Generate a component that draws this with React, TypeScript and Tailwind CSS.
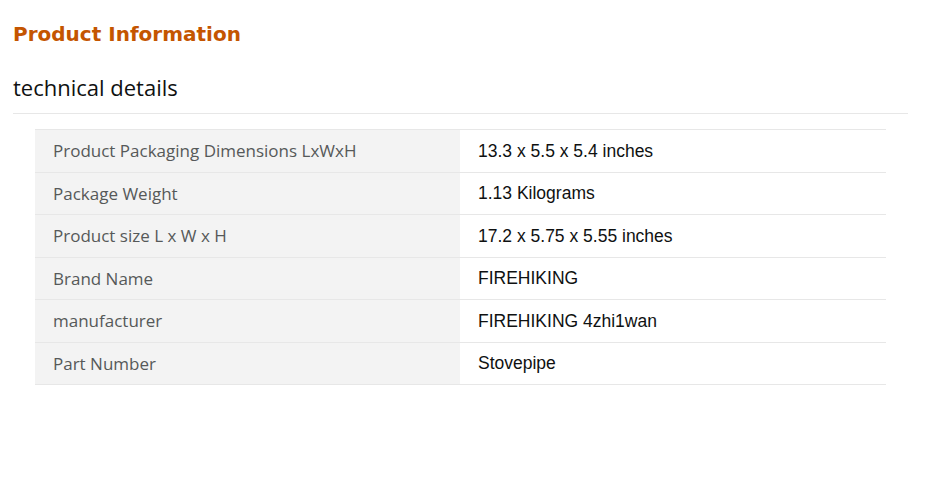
import React from 'react';

const rows: [string, string][] = [
  ['Product Packaging Dimensions LxWxH', '13.3 x 5.5 x 5.4 inches'],
  ['Package Weight', '1.13 Kilograms'],
  ['Product size L x W x H', '17.2 x 5.75 x 5.55 inches'],
  ['Brand Name', 'FIREHIKING'],
  ['manufacturer', 'FIREHIKING 4zhi1wan'],
  ['Part Number', 'Stovepipe'],
];

const App = () => {
  return (
    <div className="w-[934px] h-[478px] bg-white pl-[13px] pr-[26px] pt-[21px]">
      <h1 className="font-['DejaVu_Sans',sans-serif] font-bold text-[20px] leading-[26px] text-[#c45500]">
        Product Information
      </h1>

      <h2 className="mt-[24px] font-['Open_Sans',sans-serif] text-[22px] leading-[32px] text-[#0f1111] pb-[10px] border-b border-[#e7e7e7]">
        technical details
      </h2>

      {/* Specs table */}
      <table className="mt-[15px] ml-[22px] w-[851px] border-collapse">
        <tbody>
          {rows.map(([label, value]) => (
            <tr key={label} className="border-t border-b border-[#e7e7e7]">
              <th className="w-[425px] h-[42.5px] bg-[#f3f3f3] pl-[18px] text-left font-normal font-['Open_Sans',sans-serif] text-[17px] text-[#565959]">
                {label}
              </th>
              <td className="h-[42.5px] pl-[18px] font-['Liberation_Sans',Arial,sans-serif] text-[17.5px] text-[#0f1111]">
                {value}
              </td>
            </tr>
          ))}
        </tbody>
      </table>
    </div>
  );
};

export default App;
